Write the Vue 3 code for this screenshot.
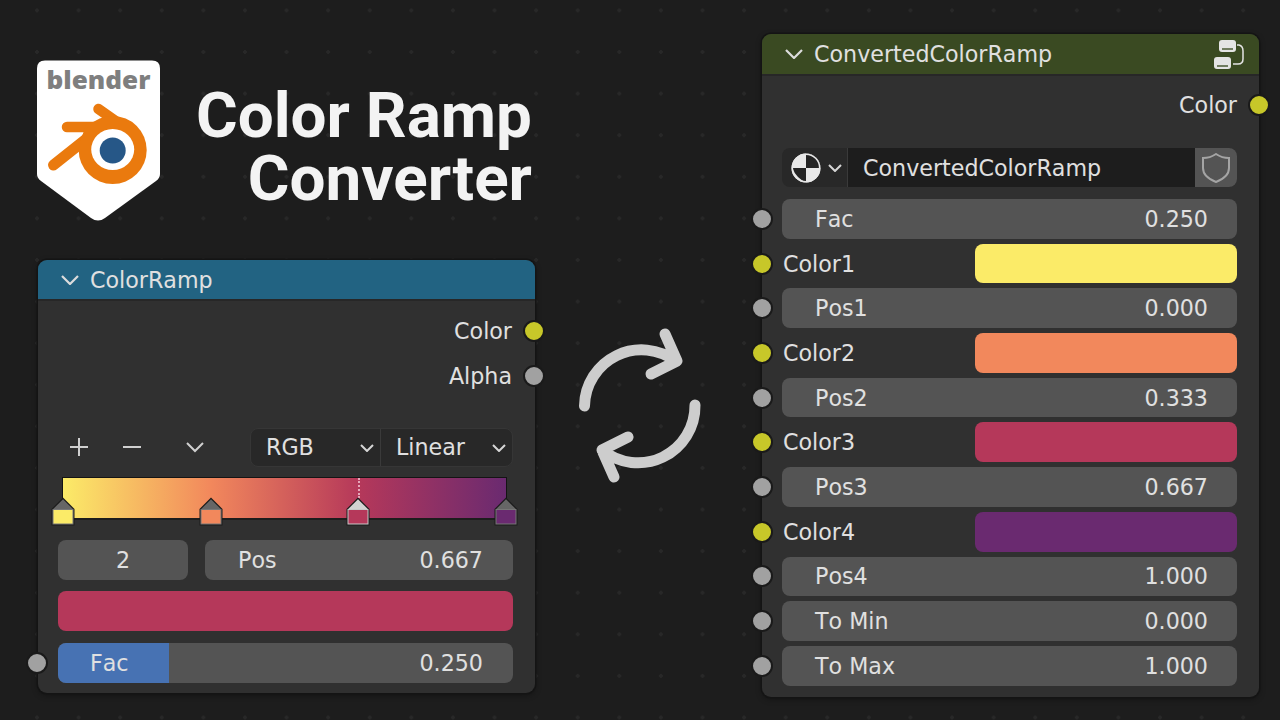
<script setup>
const stops = [
  { pos: 0, color: '#fbeb68' },
  { pos: 33.3, color: '#f2885c' },
  { pos: 66.7, color: '#b5385a', active: true },
  { pos: 100, color: '#6a2a70' }
]

const rampGradient = `linear-gradient(90deg, ${stops.map(s => `${s.color} ${s.pos}%`).join(', ')})`

const rows = [
  { label: 'Fac', value: '0.250' },
  { label: 'Color1', color: '#fbeb68' },
  { label: 'Pos1', value: '0.000' },
  { label: 'Color2', color: '#f2885c' },
  { label: 'Pos2', value: '0.333' },
  { label: 'Color3', color: '#b5385a' },
  { label: 'Pos3', value: '0.667' },
  { label: 'Color4', color: '#6a2a70' },
  { label: 'Pos4', value: '1.000' },
  { label: 'To Min', value: '0.000' },
  { label: 'To Max', value: '1.000' }
]
</script>

<template>
  <div class="canvas">
    <div class="left-col">
      <div class="brand">
        <svg class="logo" viewBox="37 60 123 161" width="123" height="161">
          <path d="M45 60.5H152Q160 60.5 160 68.5V174Q160 178 156 181L105 218Q98 223 91 218L41 181Q37 178 37 174V68.5Q37 60.5 45 60.5Z" fill="#fff" />
          <text class="logo-word" x="46.5" y="88.500" textLength="104" lengthAdjust="spacingAndGlyphs">blender</text>
          <g fill="none" stroke="#ea7a0e" stroke-linecap="round">
            <path d="M98.500 109L134 134" stroke-width="10.500" />
            <path d="M67 127H108" stroke-width="10.500" />
            <path d="M53.500 165L90 136" stroke-width="11" />
          </g>
          <path d="M87 122H118L138 136L118 150L86 153L80 143Z" fill="#ea7a0e" />
          <circle cx="112.7" cy="150" r="34" fill="#ea7a0e" />
          <ellipse cx="112.7" cy="149.500" rx="21.500" ry="20.500" fill="#fff" />
          <circle cx="112.7" cy="150.500" r="13" fill="#265787" />
        </svg>
        <h1 class="title">Color Ramp<br />Converter</h1>
      </div>

      <div class="node ramp-node">
        <div class="node-head head-blue">
          <svg class="head-chev" viewBox="0 0 18 10" width="18" height="10"><path d="M1 1L9 9L17 1" /></svg>
          <span>ColorRamp</span>
        </div>
        <div class="ramp-body">
          <div class="out-row">Color<i class="socket out yellow"></i></div>
          <div class="out-row">Alpha<i class="socket out gray"></i></div>

          <div class="tools">
            <div class="tool-icons">
              <svg viewBox="0 0 20 20" width="20" height="20" class="tool-plus"><path d="M10 1V19M1 10H19" /></svg>
              <svg viewBox="0 0 20 20" width="20" height="20" class="tool-minus"><path d="M1 10H19" /></svg>
              <svg viewBox="0 0 20 12" width="20" height="12" class="tool-chev"><path d="M2 2L10 10L18 2" /></svg>
            </div>
            <div class="dropdowns">
              <div class="drop drop-rgb">RGB<svg viewBox="0 0 14 8" width="14" height="8"><path d="M1 1L7 7L13 1" /></svg></div>
              <div class="drop drop-linear">Linear<svg viewBox="0 0 14 8" width="14" height="8"><path d="M1 1L7 7L13 1" /></svg></div>
            </div>
          </div>

          <div class="ramp" :style="{ background: rampGradient }">
            <div v-for="s in stops" :key="s.pos" class="marker-wrap" :style="{ left: s.pos + '%' }">
              <i v-if="s.active" class="active-line"></i>
              <svg class="marker" viewBox="0 0 24 29" width="24" height="29">
                <path d="M12 .5L23.500 12V28.500H.5V12Z" fill="#1b1b1b" />
                <path d="M12 2.200L21.800 12H2.200Z" :fill="s.active ? '#d2d2d2' : '#666'" />
                <rect x="1.500" y="12" width="21" height="15.500" :fill="s.active ? '#c8c8c8' : '#777'" />
                <rect x="2.500" y="13" width="19" height="13.500" :fill="s.color" />
              </svg>
            </div>
          </div>

          <div class="index-row">
            <div class="field index-field">2</div>
            <div class="field pos-field"><span>Pos</span><span>0.667</span></div>
          </div>
          <div class="active-color"></div>
          <div class="field fac-field">
            <i class="fac-fill"></i>
            <span class="fac-text">Fac</span><span class="fac-text">0.250</span>
            <i class="socket in gray"></i>
          </div>
        </div>
      </div>
    </div>

    <div class="middle">
      <svg class="arrows" viewBox="570 320 140 170" width="140" height="170">
        <path d="M584.500 406A57 57 0 0 1 676 361.500M665 334L677 361L651 374" />
        <path d="M695 405A57 57 0 0 1 602 450M628 437L602 450L614 477" />
      </svg>
    </div>

    <div class="node conv-node">
      <div class="node-head head-green">
        <svg class="head-chev" viewBox="0 0 18 10" width="18" height="10"><path d="M1 1L9 9L17 1" /></svg>
        <span>ConvertedColorRamp</span>
        <svg class="group-icon" viewBox="0 0 34 34" width="34" height="34">
          <rect x="7" y="2" width="17" height="12" rx="3" fill="#e4e4e4" />
          <rect x="2" y="19" width="17" height="12" rx="3" fill="#e4e4e4" />
          <path d="M10 11H21M5 28H16" stroke="#4a5a34" stroke-width="1.500" />
          <path d="M25 7H27Q31 8 31 13V21Q31 26 26 26H21" fill="none" stroke="#e4e4e4" stroke-width="1.500" />
        </svg>
      </div>
      <div class="conv-body">
        <div class="out-row">Color<i class="socket out yellow"></i></div>

        <div class="selector">
          <div class="sel-icon">
            <svg viewBox="0 0 30 30" width="30" height="30">
              <circle cx="15" cy="15" r="14.500" fill="#e8e8e8" />
              <path d="M15 15V.5A14.500 14.500 0 0 1 29.500 15Z" fill="#242424" />
              <path d="M15 15H1.500Q3 20 7 24Q11 28 15 29.500Z" fill="#242424" />
              <circle cx="15" cy="15" r="13.700" fill="none" stroke="#e8e8e8" stroke-width="1.500" />
            </svg>
            <svg class="sel-chev" viewBox="0 0 14 8" width="14" height="8"><path d="M1 1L7 7L13 1" /></svg>
          </div>
          <div class="sel-name">ConvertedColorRamp</div>
          <div class="sel-shield">
            <svg viewBox="0 0 28 30" width="28" height="30">
              <path d="M14 1Q20 5 27 5V15Q27 24 14 29Q1 24 1 15V5Q8 5 14 1Z" fill="none" stroke="#a4a4a4" stroke-width="2" />
            </svg>
          </div>
        </div>

        <div class="rows">
          <div v-for="r in rows" :key="r.label" class="in-row">
            <i class="socket in" :class="r.color ? 'yellow' : 'gray'"></i>
            <template v-if="r.color">
              <span class="color-label">{{ r.label }}</span>
              <span class="swatch" :style="{ background: r.color }"></span>
            </template>
            <div v-else class="field value-field"><span>{{ r.label }}</span><span>{{ r.value }}</span></div>
          </div>
        </div>
      </div>
    </div>
  </div>
</template>

<style>
html, body {
  margin: 0;
  background: #1d1d1d;
}
</style>

<style scoped>
.canvas {
  width: 1280px;
  height: 720px;
  overflow: hidden;
  display: flex;
  box-sizing: border-box;
  padding-left: 38px;
  background-color: #1d1d1d;
  background-image: radial-gradient(circle, #282828 1.6px, transparent 2.1px);
  background-size: 41.6px 41.6px;
  background-position: 16.2px 31.2px;
  font-family: "DejaVu Sans", sans-serif;
  font-size: 22.2px;
  font-kerning: none;
  color: #e0e0e0;
}

.left-col {
  width: 497px;
  padding-top: 60px;
}

.brand {
  display: flex;
  justify-content: space-between;
  margin-left: -1px;
  height: 161px;
  margin-bottom: 39px;
}

.logo-word {
  font-family: "Open Sans", sans-serif;
  font-weight: 800;
  font-size: 24.500px;
  fill: #7f7f7f;
}

.title {
  margin: 24px 3px 0 0;
  font-family: Roboto, sans-serif;
  font-weight: 700;
  font-size: 63.800px;
  font-kerning: normal;
  line-height: 63px;
  text-align: right;
  color: #f3f3f3;
}

.node {
  width: 497px;
  box-sizing: border-box;
  border-radius: 9px;
  background: #303030;
  box-shadow: 0 0 0 1.500px #141414, 0 2px 6px rgba(0, 0, 0, 0.4);
}

.node-head {
  display: flex;
  align-items: center;
  gap: 11px;
  padding-left: 23px;
  border-radius: 9px 9px 0 0;
  border-bottom: 2px solid #272727;
  box-sizing: border-box;
}

.head-blue {
  height: 41px;
  background: #226382;
}

.head-green {
  height: 42px;
  background: #3a4a22;
}

.head-chev {
  fill: none;
  stroke: #dcdcdc;
  stroke-width: 2.200;
}

.group-icon {
  margin-left: auto;
  margin-right: 13px;
  margin-top: 2px;
}

.ramp-body {
  padding: 7px 22px 10px 20px;
  height: 392px;
  box-sizing: border-box;
}

.ramp-body .out-row {
  padding-right: 1px;
}

.out-row {
  position: relative;
  height: 45px;
  display: flex;
  align-items: center;
  justify-content: flex-end;
}

.socket {
  position: absolute;
  width: 18px;
  height: 18px;
  border-radius: 50%;
  border: 2px solid #1a1a1a;
  top: 50%;
  margin-top: -11px;
}

.socket.out {
  right: -33px;
}

.ramp-body .socket.out {
  right: -32px;
}

.socket.in {
  left: -31px;
}

.fac-field .socket.in {
  left: -32px;
}

.yellow {
  background: #c7c729;
}

.gray {
  background: #a1a1a1;
}

.tools {
  margin-top: 30px;
  height: 39px;
  display: flex;
  justify-content: space-between;
  align-items: center;
}

.tool-icons {
  display: flex;
  align-items: center;
  padding-left: 11px;
  margin-top: -1px;
}

.tool-icons svg {
  fill: none;
  stroke: #d0d0d0;
  stroke-width: 2;
}

.tool-minus {
  margin-left: 33px;
}

.tool-chev {
  margin-left: 43px;
}

.dropdowns {
  width: 263px;
  height: 39px;
  box-sizing: border-box;
  display: flex;
  background: #282828;
  border: 1px solid #363636;
  border-radius: 8px;
}

.drop {
  display: flex;
  align-items: center;
  justify-content: space-between;
  box-sizing: border-box;
  padding: 0 6px 2px 15px;
}

.drop svg,
.sel-chev {
  fill: none;
  stroke: #d6d6d6;
  stroke-width: 2;
}

.drop svg {
  margin-top: 3px;
}

.drop-rgb {
  width: 130px;
  border-right: 1px solid #3a3a3a;
}

.drop-linear {
  flex: 1;
}

.ramp {
  position: relative;
  margin: 10px 6px 20px 4px;
  height: 43px;
  box-sizing: border-box;
  border: 1px solid #141414;
  border-bottom: 2px solid #1d1d1d;
}

.marker-wrap {
  position: absolute;
  top: 0;
  width: 0;
  height: 100%;
}

.active-line {
  position: absolute;
  left: -0.5px;
  top: 0;
  height: 20px;
  border-left: 2px dotted #e6a8ba;
}

.marker {
  position: absolute;
  left: -12px;
  top: 19px;
}

.index-row {
  display: flex;
  justify-content: space-between;
}

.field {
  background: #545454;
  border-radius: 8px;
  height: 40px;
  display: flex;
  align-items: center;
  box-sizing: border-box;
}

.index-field {
  width: 130px;
  justify-content: center;
}

.pos-field {
  width: 308px;
  justify-content: space-between;
  padding: 0 30px 0 33px;
}

.active-color {
  margin: 11px 0 12px;
  height: 40px;
  border-radius: 8px;
  background: #b5385a;
}

.fac-field {
  position: relative;
  justify-content: space-between;
  padding: 0 30px 0 32px;
}

.fac-fill {
  position: absolute;
  left: 0;
  top: 0;
  width: 111px;
  height: 100%;
  border-radius: 8px 0 0 8px;
  background: #4772b3;
}

.fac-text {
  position: relative;
}

.conv-node {
  height: 663px;
  margin-top: 34px;
}

.middle {
  width: 227px;
  box-sizing: border-box;
  padding: 320px 18px 0 0;
  display: flex;
  justify-content: center;
}

.arrows {
  height: 170px;
  fill: none;
  stroke: #cdcdcd;
  stroke-width: 11;
  stroke-linecap: round;
  stroke-linejoin: round;
}

.conv-body {
  padding: 6px 22px 0 20px;
}

.selector {
  margin-top: 21px;
  height: 39px;
  display: flex;
  background: #282828;
  border-radius: 8px;
  overflow: hidden;
}

.sel-icon {
  width: 66px;
  display: flex;
  align-items: center;
  gap: 7px;
  padding-left: 9px;
  box-sizing: border-box;
  border-right: 1px solid #3a3a3a;
}

.sel-name {
  flex: 1;
  display: flex;
  align-items: center;
  padding-left: 15px;
  background: #1d1d1d;
}

.sel-shield {
  width: 42px;
  display: flex;
  align-items: center;
  justify-content: center;
  background: #545454;
}

.rows {
  margin-top: 12px;
  display: grid;
  grid-auto-rows: 39.700px;
  row-gap: 5px;
}

.in-row {
  position: relative;
  display: flex;
  align-items: center;
  justify-content: space-between;
}

.in-row .field {
  height: 100%;
}

.color-label {
  padding-left: 1px;
}

.swatch {
  width: 262px;
  height: 100%;
  border-radius: 8px;
}

.value-field {
  width: 100%;
  justify-content: space-between;
  padding: 0 29px 0 33px;
}
</style>
